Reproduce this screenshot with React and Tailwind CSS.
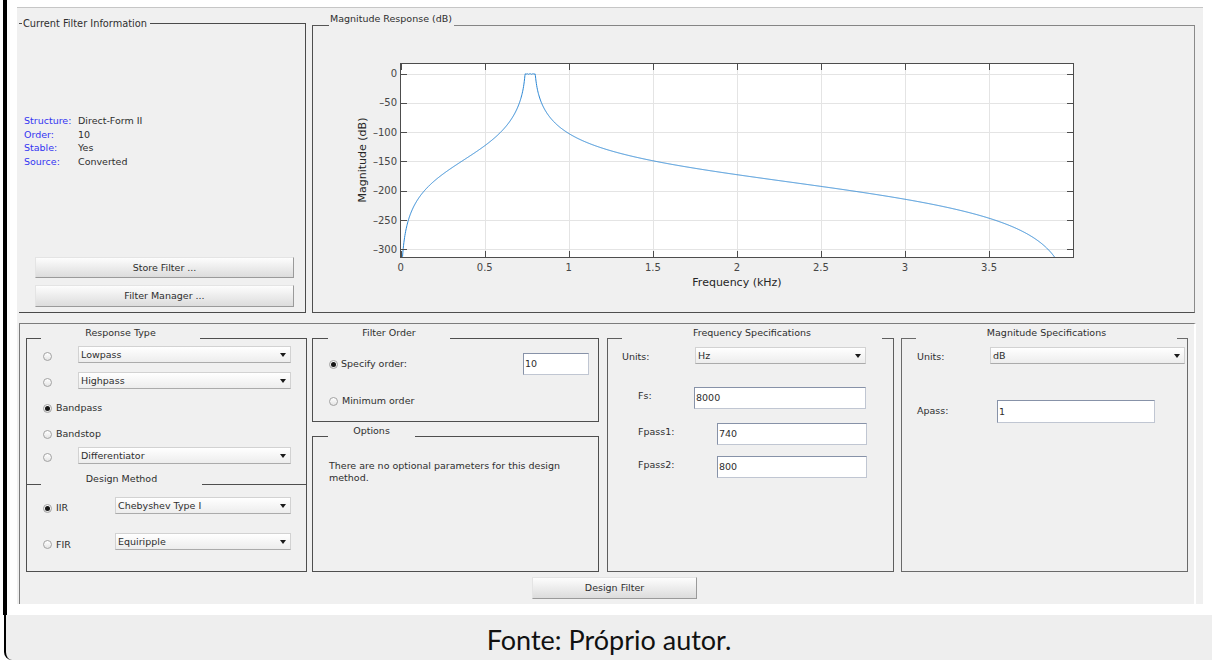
import React from 'react';

const EPS2 = Math.pow(10, 0.1) - 1; // 1 dB passband ripple
const FS = 8000;
const W1 = Math.tan((Math.PI * 740) / FS);
const W2 = Math.tan((Math.PI * 800) / FS);

// Chebyshev type I bandpass, order 10, through the bilinear transform
function magnitudeDb(f) {
  const w = Math.tan((Math.PI * f) / FS);
  const x = Math.abs((w * w - W1 * W2) / ((W2 - W1) * w));
  if (!isFinite(x)) return -400;
  if (x <= 1) {
    const t = Math.cos(5 * Math.acos(x));
    return -10 * Math.log10(1 + EPS2 * t * t);
  }
  const a = 5 * Math.acosh(x);
  if (a > 200) return -10 * (Math.log10(EPS2) + (2 * (a - Math.LN2)) / Math.LN10);
  const t = Math.cosh(a);
  return -10 * Math.log10(1 + EPS2 * t * t);
}

const fx = (khz) => 87.7 + khz * 168.1;
const fy = (db) => 47.7 - db * 0.5853;
const crisp = (v) => Math.round(v) + 0.5;

function buildCurve() {
  const pts = [];
  for (let f = 1; f <= 4000; f += 2) {
    const db = Math.max(magnitudeDb(f), -340);
    pts.push(`${fx(f / 1000).toFixed(2)},${fy(db).toFixed(2)}`);
  }
  return 'M' + pts.join('L');
}

const xTicks = [0, 0.5, 1, 1.5, 2, 2.5, 3, 3.5];
const yTicks = [0, -50, -100, -150, -200, -250, -300];

function ResponsePlot() {
  const curve = buildCurve();
  return (
    <svg width="881" height="286" className="block" fontFamily="DejaVu Sans, sans-serif">
      <defs>
        <clipPath id="axes-clip">
          <rect x="88" y="38" width="672" height="193" />
        </clipPath>
      </defs>
      <rect x="87.5" y="37.5" width="673" height="194" fill="#ffffff" />
      {xTicks.slice(1).map((k) => (
        <line key={k} x1={crisp(fx(k))} x2={crisp(fx(k))} y1="38" y2="231" stroke="#e4e4e4" />
      ))}
      {yTicks.map((d) => (
        <line key={d} x1="88" x2="760" y1={crisp(fy(d))} y2={crisp(fy(d))} stroke="#e4e4e4" />
      ))}
      <path d={curve} fill="none" stroke="#2a86d4" strokeWidth="1" clipPath="url(#axes-clip)" />
      <rect x="87.5" y="37.5" width="673" height="194" fill="none" stroke="#4d4d4d" />
      {xTicks.map((k) => (
        <g key={k} stroke="#4d4d4d">
          <line x1={crisp(fx(k))} x2={crisp(fx(k))} y1="231" y2="225" />
          <line x1={crisp(fx(k))} x2={crisp(fx(k))} y1="38" y2="44" />
        </g>
      ))}
      {yTicks.map((d) => (
        <g key={d} stroke="#4d4d4d">
          <line x1="88" x2="94" y1={crisp(fy(d))} y2={crisp(fy(d))} />
          <line x1="760" x2="754" y1={crisp(fy(d))} y2={crisp(fy(d))} />
        </g>
      ))}
      {xTicks.map((k) => (
        <text key={k} x={fx(k)} y="245" fontSize="10" fill="#464646" textAnchor="middle">
          {k}
        </text>
      ))}
      {yTicks.map((d) => (
        <text key={d} x="84" y={fy(d) + 3.5} fontSize="10" fill="#464646" textAnchor="end">
          {d === 0 ? '0' : '–' + -d}
        </text>
      ))}
      <text x="424" y="260" fontSize="11" fill="#262626" textAnchor="middle">
        Frequency (kHz)
      </text>
      <text x="53" y="134" fontSize="11" fill="#262626" textAnchor="middle" transform="rotate(-90 53 134)">
        Magnitude (dB)
      </text>
    </svg>
  );
}

function PushButton({ label, className }) {
  return (
    <div className={`flex items-center justify-center bg-linear-to-b from-[#fdfdfd] to-[#dcdcdc] border border-[#e4e4e4] border-r-[#9a9a9a] border-b-[#9a9a9a] leading-none ${className}`}>
      {label}
    </div>
  );
}

function Dropdown({ value, className }) {
  return (
    <div className={`flex items-center h-[17px] pl-[2px] pr-[4px] bg-linear-to-b from-white to-[#ededed] border border-[#d2d2d2] border-b-[#ababab] ${className}`}>
      <span className="flex-1 leading-none">{value}</span>
      <span className="w-0 h-0 border-l-[3px] border-r-[3px] border-t-[4px] border-l-transparent border-r-transparent border-t-[#1a1a1a]" />
    </div>
  );
}

function TextField({ value, className }) {
  return (
    <div className={`flex items-center pl-[1px] bg-white border border-[#c0c6d2] border-t-[#8792a8] border-l-[#8792a8] leading-none ${className}`}>
      {value}
    </div>
  );
}

function Radio({ checked, className = '' }) {
  return (
    <span className={`flex shrink-0 items-center justify-center w-[9px] h-[9px] rounded-full border border-[#a2a2a2] bg-linear-to-b from-white to-[#e4e4e4] ${className}`}>
      {checked && <span className="w-[5px] h-[5px] rounded-full bg-[#151515]" />}
    </span>
  );
}

function TitleRow({ title, lead, gap, line = 'border-[#4f4f4f]', className = 'h-[15px]' }) {
  return (
    <div className={`flex items-end ${className}`}>
      <div className={`border-t ${line} ${lead}`} />
      <div className={`text-center leading-[12px] ${gap}`}>{title}</div>
      <div className={`flex-1 border-t ${line}`} />
    </div>
  );
}

function ChoiceRow({ checked, value, className }) {
  return (
    <div className={`flex items-center h-[17px] ${className}`}>
      <Radio checked={checked} className="ml-[16px] mt-[4px]" />
      <Dropdown value={value} className="ml-auto mr-[15px] w-[213px]" />
    </div>
  );
}

function LabelledRadio({ checked, label, className }) {
  return (
    <div className={`flex items-center h-[16px] ${className}`}>
      <Radio checked={checked} className="ml-[16px]" />
      <span className="ml-[4px] leading-none">{label}</span>
    </div>
  );
}

function FilterInfo() {
  const rows = [
    ['Structure:', 'Direct-Form II'],
    ['Order:', '10'],
    ['Stable:', 'Yes'],
    ['Source:', 'Converted'],
  ];
  return (
    <div className="w-[287px] mt-[7px]">
      <div className="flex items-center h-[13px]">
        <div className="w-[3px] border-t border-[#4a4a4a]" />
        <div className="pl-[1px] pr-[3px] leading-[12px] text-[9.8px]">Current Filter Information</div>
        <div className="flex-1 self-end h-[7px] border-t border-r border-[#4a4a4a]" />
      </div>
      <div className="flex flex-col h-[283px] border-r border-b border-[#4a4a4a]">
        <div className="pt-[84px] pl-[5px]">
          {rows.map(([k, v]) => (
            <div key={k} className="flex leading-[13.7px]">
              <span className="w-[54px] text-[#3434f2]">{k}</span>
              <span>{v}</span>
            </div>
          ))}
        </div>
        <div className="mt-auto mb-[5px] ml-[16px] w-[259px] flex flex-col">
          <PushButton label="Store Filter ..." className="h-[21px]" />
          <PushButton label="Filter Manager ..." className="h-[22px] mt-[7px]" />
        </div>
      </div>
    </div>
  );
}

function MagnitudePanel() {
  return (
    <div className="w-[883px] ml-[6px]">
      <div className="flex items-end h-[16px]">
        <div className="w-[17px] border-t border-[#555]" />
        <div className="pl-[1px] pr-[2px] mb-[1px] leading-[12px]">Magnitude Response (dB)</div>
        <div className="flex-1 self-end h-[1px] border-t border-[#858585]" />
      </div>
      <div className="h-[287px] border-l border-b border-r border-[#4f4f4f] border-r-[#8a8a8a]">
        <ResponsePlot />
      </div>
    </div>
  );
}

function ResponseTypeColumn() {
  return (
    <div className="w-[281px]">
      <TitleRow title="Response Type" lead="w-[15px]" gap="w-[159px]" />
      <div className="h-[233px] pt-[7px] border-l border-r border-b border-[#4f4f4f]">
        <ChoiceRow value="Lowpass" />
        <ChoiceRow value="Highpass" className="mt-[9px]" />
        <LabelledRadio checked label="Bandpass" className="mt-[11px]" />
        <LabelledRadio label="Bandstop" className="mt-[10px]" />
        <ChoiceRow value="Differentiator" className="mt-[5px]" />
        <TitleRow title="Design Method" lead="w-[14px]" gap="w-[161px]" className="h-[15px] mt-[6px]" />
        <div className="flex items-center h-[17px] mt-[12px]">
          <Radio checked className="ml-[16px] mt-[5px]" />
          <span className="ml-[4px] mt-[5px] leading-none">IIR</span>
          <Dropdown value="Chebyshev Type I" className="ml-auto mr-[15px] w-[176px]" />
        </div>
        <div className="flex items-center h-[17px] mt-[19px]">
          <Radio className="ml-[16px] mt-[6px]" />
          <span className="ml-[4px] mt-[6px] leading-none">FIR</span>
          <Dropdown value="Equiripple" className="ml-auto mr-[15px] w-[176px]" />
        </div>
      </div>
    </div>
  );
}

function OrderColumn() {
  return (
    <div className="w-[287px] ml-[5px]">
      <TitleRow title="Filter Order" lead="w-[16px]" gap="w-[122px]" />
      <div className="h-[83px] pt-[14px] border-l border-r border-b border-[#4f4f4f]">
        <div className="flex items-center h-[22px]">
          <Radio checked className="ml-[16px]" />
          <span className="ml-[3px] leading-none">Specify order:</span>
          <TextField value="10" className="ml-auto mr-[9px] w-[66px] h-[22px]" />
        </div>
        <LabelledRadio label="Minimum order" className="mt-[18px]" />
      </div>
      <TitleRow title="Options" lead="w-[16px]" gap="w-[87px]" />
      <div className="h-[135px] pt-[23px] pl-[16px] border-l border-r border-b border-[#4f4f4f]">
        <p className="w-[250px] leading-[12px]">There are no optional parameters for this design method.</p>
      </div>
    </div>
  );
}

function FrequencyColumn() {
  return (
    <div className="w-[287px] ml-[8px]">
      <TitleRow title="Frequency Specifications" lead="w-[15px]" gap="w-[260px]" line="border-[#5e5e5e]" />
      <div className="h-[233px] pt-[8px] border-l border-r border-b border-[#5e5e5e]">
        <div className="flex items-center h-[17px]">
          <span className="ml-[14px] w-[73px] mt-[3px] leading-none">Units:</span>
          <Dropdown value="Hz" className="w-[171px]" />
        </div>
        <div className="flex items-center h-[22px] mt-[23px]">
          <span className="ml-[30px] w-[56px] mb-[4px] leading-none">Fs:</span>
          <TextField value="8000" className="w-[172px] h-[22px]" />
        </div>
        <div className="flex items-center h-[22px] mt-[14px]">
          <span className="ml-[30px] w-[79px] mb-[4px] leading-none">Fpass1:</span>
          <TextField value="740" className="w-[150px] h-[22px]" />
        </div>
        <div className="flex items-center h-[22px] mt-[11px]">
          <span className="ml-[30px] w-[79px] mb-[4px] leading-none">Fpass2:</span>
          <TextField value="800" className="w-[150px] h-[22px]" />
        </div>
      </div>
    </div>
  );
}

function MagnitudeColumn() {
  return (
    <div className="w-[287px] ml-[7px]">
      <TitleRow title="Magnitude Specifications" lead="w-[15px]" gap="w-[261px]" line="border-[#6a6a6a]" />
      <div className="h-[233px] pt-[8px] border-l border-r border-b border-[#6a6a6a]">
        <div className="flex items-center h-[17px]">
          <span className="ml-[15px] w-[73px] mt-[3px] leading-none">Units:</span>
          <Dropdown value="dB" className="w-[195px]" />
        </div>
        <div className="flex items-center h-[23px] mt-[36px]">
          <span className="ml-[15px] w-[80px] mb-[2px] leading-none">Apass:</span>
          <TextField value="1" className="w-[158px] h-[23px]" />
        </div>
      </div>
    </div>
  );
}

export default function App() {
  return (
    <div className="w-[1214px] h-[660px] overflow-hidden bg-white flex flex-col font-['DejaVu_Sans',sans-serif] text-[9.5px] text-[#2e2e2e]">
      <div className="flex h-[615px] shrink-0">
        <div className="ml-[3px] w-[4px] h-full bg-black" />
        <div className="ml-[10px] pt-[7px]">
          <div className="w-[1186px] h-[597px] flex flex-col bg-[#f0f0f0] border-t border-[#c6c6c6]">
            <div className="flex items-start pl-[2px] pt-[2px]">
              <FilterInfo />
              <MagnitudePanel />
            </div>
            <div className="flex-1 flex flex-col ml-[2px] mt-[10px] w-[1177px] border-t border-l border-[#7c7c7c] border-r-2 border-r-white">
              <div className="flex pl-[6px]">
                <ResponseTypeColumn />
                <OrderColumn />
                <FrequencyColumn />
                <MagnitudeColumn />
              </div>
              <PushButton label="Design Filter" className="mt-[5px] ml-[512px] w-[165px] h-[22px]" />
            </div>
          </div>
        </div>
      </div>
      <div className="ml-[4px] w-[1208px] h-[45px] shrink-0 pt-[2px] flex items-start justify-center bg-[#eeeeee] border-l-2 border-black rounded-bl-[8px]">
        <span className="mt-[9px] font-['Lato',sans-serif] text-[27px] leading-[28px] text-[#111]">Fonte: Próprio autor.</span>
      </div>
    </div>
  );
}
